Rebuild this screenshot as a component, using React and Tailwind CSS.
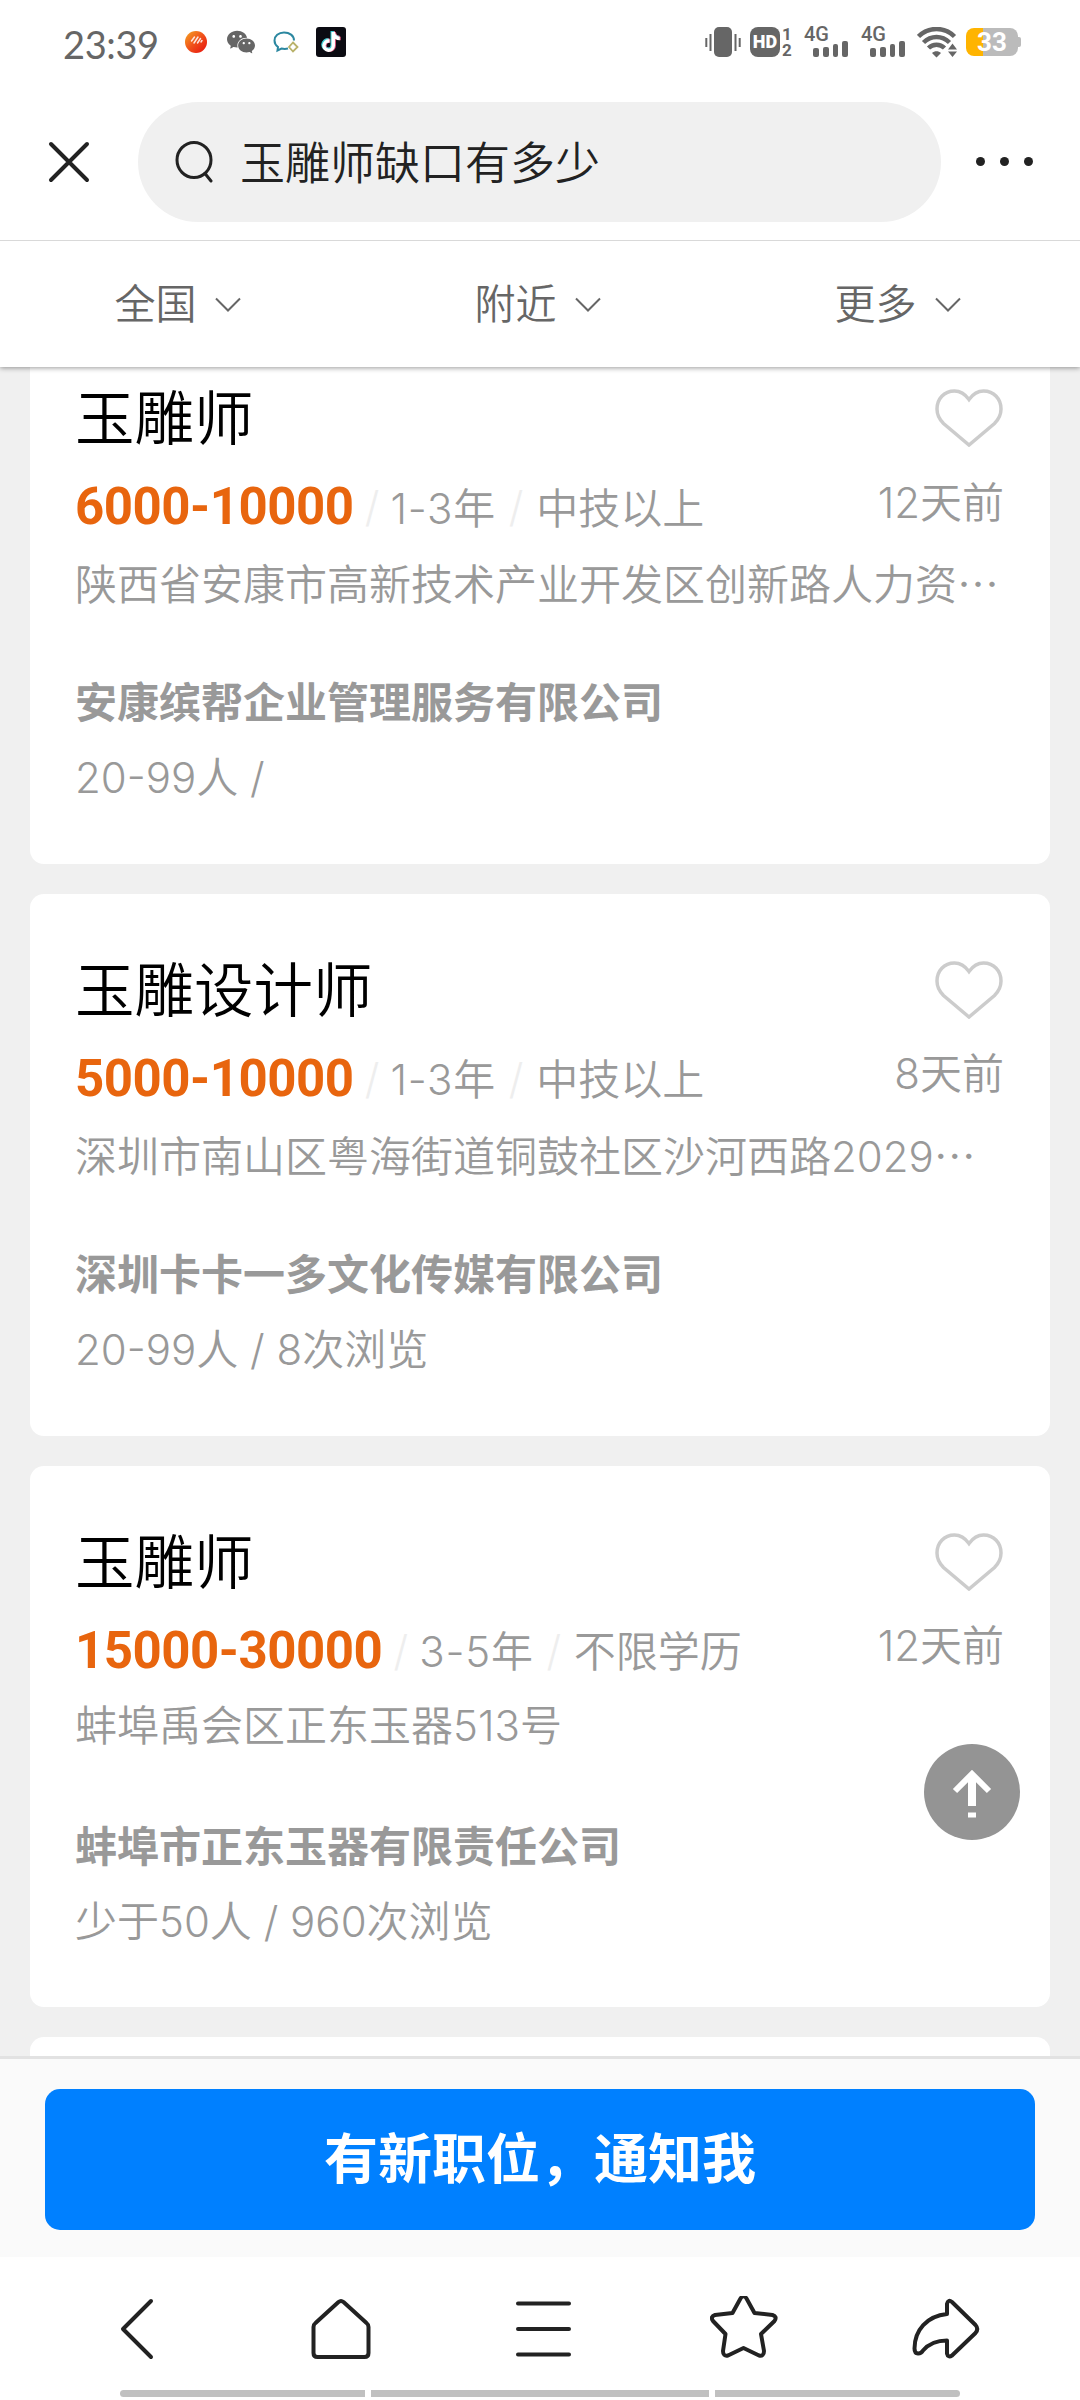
import { AiFillWechat } from 'react-icons/ai';
import { FaTiktok } from 'react-icons/fa';

const jobs = [
  {
    title: '玉雕师',
    salary: '6000-10000',
    years: '1-3年',
    degree: '中技以上',
    posted: '12天前',
    address: '陕西省安康市高新技术产业开发区创新路人力资',
    clipped: true,
    company: '安康缤帮企业管理服务有限公司',
    info: '20-99人 /',
  },
  {
    title: '玉雕设计师',
    salary: '5000-10000',
    years: '1-3年',
    degree: '中技以上',
    posted: '8天前',
    address: '深圳市南山区粤海街道铜鼓社区沙河西路2029',
    clipped: true,
    company: '深圳卡卡一多文化传媒有限公司',
    info: '20-99人 / 8次浏览',
  },
  {
    title: '玉雕师',
    salary: '15000-30000',
    years: '3-5年',
    degree: '不限学历',
    posted: '12天前',
    address: '蚌埠禹会区正东玉器513号',
    clipped: false,
    company: '蚌埠市正东玉器有限责任公司',
    info: '少于50人 / 960次浏览',
  },
];

const filters = ['全国', '附近', '更多'];

const Signal = () => (
  <div className="flex h-[30px] w-[44px] flex-col justify-between">
    <span className="font-['Roboto',sans-serif] text-[20px] font-medium leading-[14px]">4G</span>
    <div className="flex h-[16px] items-end gap-[4px] pl-[9px]">
      <i className="h-[9px] w-[6px] rounded-[2px] bg-[#666]" />
      <i className="h-[10px] w-[6px] rounded-[2px] bg-[#666]" />
      <i className="h-[13px] w-[6px] rounded-[2px] bg-[#666]" />
      <i className="h-[16px] w-[6px] rounded-[2px] bg-[#666]" />
    </div>
  </div>
);

const StatusBar = () => (
  <div className="flex h-[84px] items-center pl-[63px] pr-[59px] text-[#666]">
    <span className="w-[122px] pt-[3px] font-['Lato',sans-serif] text-[38px] font-normal leading-none tracking-[-0.4px]">23:39</span>
    <svg className="size-[22px]" viewBox="0 0 22 22">
      <defs>
        <linearGradient id="ball" x1="0" y1="0" x2="1" y2="1">
          <stop offset="0" stopColor="#f5a623" />
          <stop offset="0.5" stopColor="#f0501a" />
          <stop offset="1" stopColor="#e60f0f" />
        </linearGradient>
      </defs>
      <circle cx="11" cy="11" r="11" fill="url(#ball)" />
      <path d="M6.500 10l3-4M9 12l4-6M12.500 12l3-4.500M16 11l1-1.500" stroke="#fff" strokeWidth="1.500" strokeLinecap="round" opacity=".85" />
    </svg>
    <AiFillWechat className="ml-[18px] size-[32px]" />
    <svg className="ml-[16px] h-[24px] w-[26px]" viewBox="0 0 26 24" fill="none">
      <path d="M21 10.500C21 5.500 16.500 2.500 11 2.500S1.500 6 1.500 10.500c0 3 1.500 5 3.500 6.500l-.5 3.500 4-2c2 .5 4.500.5 6.500 0" stroke="#2b87a0" strokeWidth="2" />
      <path d="M20 12.500l4.500 4.500-4.500 4.500-4-4.500z" stroke="#b9b26a" strokeWidth="1.800" />
    </svg>
    <div className="ml-[17px] flex size-[30px] items-center justify-center rounded-[3px] bg-[#0b0b12] text-white">
      <FaTiktok className="size-[20px] [filter:drop-shadow(-1px_-0.5px_0_#3ccfd6)_drop-shadow(1px_0.5px_0_#d9557a)]" />
    </div>

    <div className="ml-auto flex items-center">
      <svg className="h-[30px] w-[36px]" viewBox="0 0 36 30" fill="#666">
        <rect x="9" y="0" width="18" height="30" rx="5" />
        <path d="M5.500 7v17M30.500 7v17M1.300 11v9M34.700 11v9" stroke="#666" strokeWidth="2" />
      </svg>
      <div className="ml-[9px] flex size-[30px] items-center justify-center rounded-[8px] bg-[#666] font-['Roboto',sans-serif] text-[18px] font-black leading-none text-white">
        HD
      </div>
      <div className="ml-[1px] flex h-[30px] w-[12px] flex-col justify-between text-center font-['Roboto',sans-serif] text-[17px] font-bold leading-[14px]">
        <span>1</span>
        <span>2</span>
      </div>
      <div className="ml-[11px] flex gap-[13px]">
        <Signal />
        <Signal />
      </div>
      <svg className="ml-[12px] h-[31px] w-[40px]" viewBox="0 0 40 31" fill="none" stroke="#666" strokeWidth="4.500">
        <path d="M1.500 9.500C11.500-.5 27.500-.5 37.500 9.500" />
        <path d="M6.500 15.500c7.500-7.500 18.500-7.500 26 0" />
        <path d="M11.500 21c4.500-4.500 11.500-4.500 16 0" />
        <path d="M15 26c2.500-2.500 6.500-2.500 9 0l-4.500 4.500zM31 22.500l4.500-6 4.500 6zM31 24.500l4.500 5.500 4.500-5.500z" fill="#666" stroke="none" />
      </svg>
      <div className="ml-[9px] flex items-center">
        <div className="flex h-[28px] w-[52px] items-center justify-center rounded-[8px] bg-[linear-gradient(90deg,#ffb400_33%,#bbb_33%)] font-['Roboto',sans-serif] text-[26px] font-bold leading-none text-white">
          33
        </div>
        <i className="h-[10px] w-[3px] rounded-r-[2px] bg-[#bbb]" />
      </div>
    </div>
  </div>
);

const SearchBar = () => (
  <div className="flex h-[157px] items-center border-b border-[#d9d9d9] pb-[1px] pl-[48px] pr-[47px]">
    <svg className="h-[42px] w-[42px]" viewBox="0 0 42 42" stroke="#222" strokeWidth="4" strokeLinecap="round">
      <path d="M3 3l36 36M39 3L3 39" />
    </svg>
    <div className="ml-[48px] flex h-[120px] w-[803px] items-center rounded-full bg-[#f0f0f0] pl-[37px]">
      <svg className="h-[42px] w-[38px]" viewBox="0 0 38 42" fill="none" stroke="#222" strokeWidth="3" strokeLinecap="round">
        <ellipse cx="19" cy="19" rx="17" ry="17.500" />
        <path d="M30 32.500l6 7.500" />
      </svg>
      <span className="ml-[27px] pt-[4px] text-[45px] leading-none text-[#222]">玉雕师缺口有多少</span>
    </div>
    <div className="ml-auto flex gap-[15px]">
      <i className="size-[9px] rounded-full bg-[#222]" />
      <i className="size-[9px] rounded-full bg-[#222]" />
      <i className="size-[9px] rounded-full bg-[#222]" />
    </div>
  </div>
);

const FilterBar = () => (
  <div className="grid h-[126px] grid-cols-3">
    {filters.map((name) => (
      <div key={name} className="flex items-center justify-center gap-[17px] pr-[4px] text-[41px] leading-none text-[#666]">
        {name}
        <svg className="mt-[1px] h-[16px] w-[28px]" viewBox="0 0 28 16" fill="none" stroke="#666" strokeWidth="2">
          <path d="M2 1.500l12 12 12-12" />
        </svg>
      </div>
    ))}
  </div>
);

const JobCard = ({ job }) => (
  <article className="flex h-[541.800px] shrink-0 flex-col rounded-[14px] bg-white pl-[45px] pr-[46px] pt-[56px] text-[42px] text-[#999]">
    <div className="flex h-[80px] items-center justify-between">
      <h2 className="text-[59.500px] leading-[80px] text-black">{job.title}</h2>
      <svg className="h-[58px] w-[70px]" viewBox="0 0 70 58" fill="none" stroke="#ccc" strokeWidth="3.500">
        <path d="M35 10.500C31 5 26.500 2 20.500 2 10 2 3 10 3 20c0 6 2.500 10.500 6.500 14.500L35 56l25.500-21.500C64.500 30.500 67 26 67 20 67 10 60 2 49.500 2 43.500 2 39 5 35 10.500z" />
      </svg>
    </div>
    <div className="mt-[16px] flex h-[66px] items-center leading-[66px]">
      <strong className="font-['Roboto',sans-serif] text-[51px] font-bold tracking-[-0.5px] text-[#e8650e]">{job.salary}</strong>
      <span className="w-[37px] text-center text-[#eee]">/</span>
      <span className="pt-[3px] tracking-[0.8px]">{job.years}</span>
      <span className="w-[40px] text-center text-[#eee]">/</span>
      <span className="pt-[3px]">{job.degree}</span>
      <span className="ml-auto pb-[9px]">{job.posted}</span>
    </div>
    <p className="mt-[9px] h-[66px] whitespace-nowrap leading-[66px]">
      {job.address}
      {job.clipped && <span className="font-['Noto_Sans_CJK_SC',sans-serif]">…</span>}
    </p>
    <p className="mt-[55px] h-[66px] font-bold leading-[66px]">{job.company}</p>
    <p className="mt-[10px] h-[64px] leading-[64px]">{job.info}</p>
  </article>
);

const NavBar = () => (
  <nav className="flex h-[143px] flex-col bg-white">
    <div className="grid h-[133px] grid-cols-5 items-center pl-[37px] pr-[33px] pt-[10px]">
      <svg className="mx-auto h-[66px] w-[68px]" viewBox="0 0 68 66" fill="none" stroke="#222" strokeWidth="4" strokeLinecap="round" strokeLinejoin="round">
        <path d="M47 5L19 33l28 28" />
      </svg>
      <svg className="mx-auto h-[66px] w-[68px]" viewBox="0 0 68 66" fill="none" stroke="#222" strokeWidth="4" strokeLinecap="round" strokeLinejoin="round">
        <path d="M7.500 31q0-2.500 2-4L32.500 6q2.500-2 5 0l23 21q2 1.500 2 4v26q0 4-4 4h-47q-4 0-4-4z" />
      </svg>
      <svg className="mx-auto h-[66px] w-[68px]" viewBox="0 0 68 66" fill="none" stroke="#222" strokeWidth="4" strokeLinecap="round">
        <path d="M10 7.500h51M10 33h51M10 58.500h51" />
      </svg>
      <svg className="mx-auto h-[66px] w-[68px]" viewBox="0 0 68 66" fill="none" stroke="#222" strokeWidth="4" strokeLinejoin="round">
        <path d="M30.500 2.500q3-4.500 6 0L44.500 17l18 2q5 1.500 2 6L51 38l3 17q0 5.500-5 4.500L33.500 52 18 59.500q-5 1-5-4.500l2.500-17L3 25q-3-4.500 2-6l17.500-2z" />
      </svg>
      <svg className="mx-auto h-[66px] w-[68px]" viewBox="0 0 68 66" fill="none" stroke="#222" strokeWidth="4" strokeLinejoin="round">
        <path d="M35 18V8q1-5 5-2l23.500 23q3.500 4 0 8L40 59.500q-4 2.500-5-2V44.500c-11 0-18 3-24 10-2 3.500-8.500 5-8.500-2C2.500 34 15 20 35 18z" />
      </svg>
    </div>
    <div className="flex h-[7px] gap-[6px] px-[120px]">
      <i className="w-[245px] rounded-l-full bg-[#c0c0c0]" />
      <i className="w-[338px] bg-[#c0c0c0]" />
      <i className="w-[245px] rounded-r-full bg-[#c0c0c0]" />
    </div>
  </nav>
);

const App = () => {
  return (
    <div className="relative flex h-[2400px] w-[1080px] flex-col overflow-hidden bg-white font-['Inter','Noto_Sans_CJK_SC',sans-serif] font-[350]">
      <header className="relative z-10 bg-white shadow-[0_1px_5px_rgba(0,0,0,0.4)]">
        <StatusBar />
        <SearchBar />
        <FilterBar />
      </header>

      <main className="h-[1689px] overflow-hidden bg-[#f0f0f0] px-[30px]">
        <div className="-mt-[45px] flex flex-col gap-[30px]">
          {jobs.map((job) => (
            <JobCard key={job.company} job={job} />
          ))}
          <div className="h-[60px] rounded-t-[14px] bg-white" />
        </div>
      </main>

      <div className="h-[201px] border-t-[3px] border-[#e2e2e2] bg-[#fafafa] px-[45px] pt-[30px]">
        <button className="h-[141px] w-full rounded-[15px] bg-[#0080ff] text-[54px] font-bold text-white">有新职位，通知我</button>
      </div>

      <NavBar />

      <button className="absolute right-[60px] top-[1744px] size-[96px] rounded-full bg-[#949494]">
        <svg className="size-[96px]" viewBox="0 0 96 96" fill="none" stroke="#fff">
          <path d="M31 47l17-17 17 17" strokeWidth="6" />
          <path d="M48 33v29M48 68.500v5" strokeWidth="8" />
        </svg>
      </button>
    </div>
  );
};

export default App;
